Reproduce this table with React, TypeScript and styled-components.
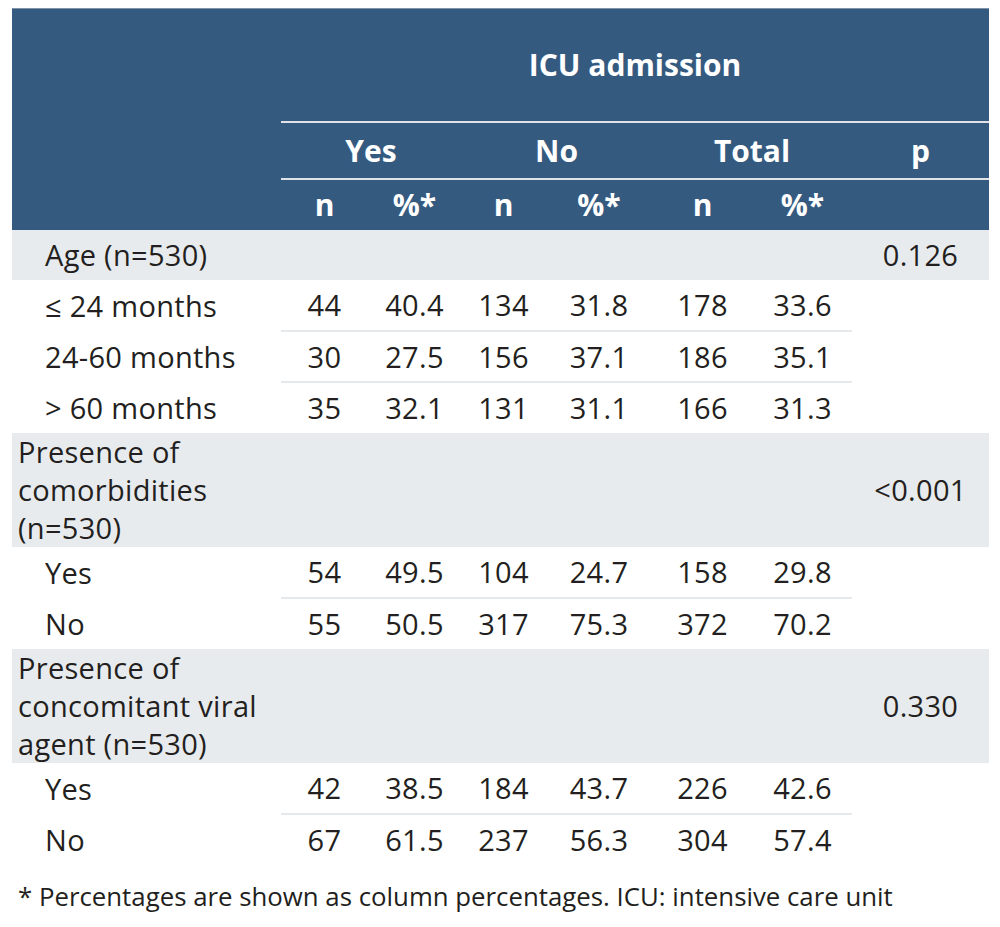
import { Fragment } from 'react';
import styled, { createGlobalStyle } from 'styled-components';

const GlobalStyle = createGlobalStyle`
  html, body {
    margin: 0;
    background: #ffffff;
  }
  body {
    padding: 8px 11px 0 12px;
    font-family: 'Open Sans', 'Noto Sans', 'Liberation Sans', sans-serif;
    color: #231f20;
  }
`;

const Table = styled.table`
  width: 977px;
  border-collapse: collapse;
  table-layout: fixed;
  font-size: 29px;
  line-height: 38px;
  letter-spacing: 0.3px;
`;

const HeadCell = styled.th<{ $h?: number; $line?: boolean }>`
  background: #355a7f;
  color: #ffffff;
  font-weight: 700;
  font-size: 30px;
  letter-spacing: 0;
  text-align: center;
  vertical-align: middle;
  padding: 0 2px;
  height: ${({ $h }) => ($h ? `${$h}px` : 'auto')};
  border-bottom: ${({ $line }) => ($line ? '2px solid #dfe3e8' : 'none')};
`;

const HeadRow = styled.tr`
  &:first-child th {
    border-top: 1px solid #8193a8;
  }
`;

const Row = styled.tr<{ $h?: number }>`
  height: ${({ $h }) => ($h ? `${$h}px` : 'auto')};
`;

const Label = styled.td<{ $indent?: boolean; $group?: boolean }>`
  padding: 0 4px 0 ${({ $indent }) => ($indent ? '33px' : '6px')};
  background: ${({ $group }) => ($group ? '#e8ebee' : '#ffffff')};
  text-align: left;
  vertical-align: middle;
`;

const Cell = styled.td<{ $group?: boolean; $top?: boolean }>`
  padding: 0 2px;
  text-align: center;
  vertical-align: middle;
  background: ${({ $group }) => ($group ? '#e8ebee' : '#ffffff')};
  border-top: ${({ $top }) => ($top ? '2px solid #e6e9ec' : 'none')};
`;

const PCell = styled.td<{ $group?: boolean }>`
  padding: 0 2px;
  text-align: center;
  vertical-align: middle;
  background: ${({ $group }) => ($group ? '#e8ebee' : '#ffffff')};
`;

const Footnote = styled.p`
  margin: 15px 0 0 6px;
  font-size: 25.8px;
  line-height: 32px;
`;

type Group = {
  label: string;
  indent: boolean;
  p: string;
  rows: { label: string; values: string[] }[];
};

const groups: Group[] = [
  {
    label: 'Age (n=530)',
    indent: true,
    p: '0.126',
    rows: [
      { label: '≤ 24 months', values: ['44', '40.4', '134', '31.8', '178', '33.6'] },
      { label: '24-60 months', values: ['30', '27.5', '156', '37.1', '186', '35.1'] },
      { label: '> 60 months', values: ['35', '32.1', '131', '31.1', '166', '31.3'] },
    ],
  },
  {
    label: 'Presence of comorbidities (n=530)',
    indent: false,
    p: '<0.001',
    rows: [
      { label: 'Yes', values: ['54', '49.5', '104', '24.7', '158', '29.8'] },
      { label: 'No', values: ['55', '50.5', '317', '75.3', '372', '70.2'] },
    ],
  },
  {
    label: 'Presence of concomitant viral agent (n=530)',
    indent: false,
    p: '0.330',
    rows: [
      { label: 'Yes', values: ['42', '38.5', '184', '43.7', '226', '42.6'] },
      { label: 'No', values: ['67', '61.5', '237', '56.3', '304', '57.4'] },
    ],
  },
];

const widths = [269, 87, 93, 85, 106, 101, 99, 137];

export default function App() {
  return (
    <>
      <GlobalStyle />
      <Table>
        <colgroup>
          {widths.map((w, i) => (
            <col key={i} style={{ width: w }} />
          ))}
        </colgroup>
        <thead>
          <HeadRow>
            <HeadCell rowSpan={3} />
            <HeadCell colSpan={7} $h={112} $line>
              ICU admission
            </HeadCell>
          </HeadRow>
          <HeadRow>
            <HeadCell colSpan={2} $h={55} $line>Yes</HeadCell>
            <HeadCell colSpan={2} $line>No</HeadCell>
            <HeadCell colSpan={2} $line>Total</HeadCell>
            <HeadCell $line>p</HeadCell>
          </HeadRow>
          <HeadRow>
            <HeadCell $h={50}>n</HeadCell>
            <HeadCell>%*</HeadCell>
            <HeadCell>n</HeadCell>
            <HeadCell>%*</HeadCell>
            <HeadCell>n</HeadCell>
            <HeadCell>%*</HeadCell>
            <HeadCell />
          </HeadRow>
        </thead>
        <tbody>
          {groups.map((g) => (
            <Fragment key={g.label}>
              <Row $h={50}>
                <Label $group $indent={g.indent}>{g.label}</Label>
                {Array.from({ length: 6 }).map((_, i) => (
                  <Cell key={i} $group />
                ))}
                <PCell $group>{g.p}</PCell>
              </Row>
              {g.rows.map((r, ri) => (
                <Row key={r.label} $h={51}>
                  <Label $indent>{r.label}</Label>
                  {r.values.map((v, i) => (
                    <Cell key={i} $top={ri > 0}>{v}</Cell>
                  ))}
                  <PCell />
                </Row>
              ))}
            </Fragment>
          ))}
        </tbody>
      </Table>
      <Footnote>* Percentages are shown as column percentages. ICU: intensive care unit</Footnote>
    </>
  );
}
